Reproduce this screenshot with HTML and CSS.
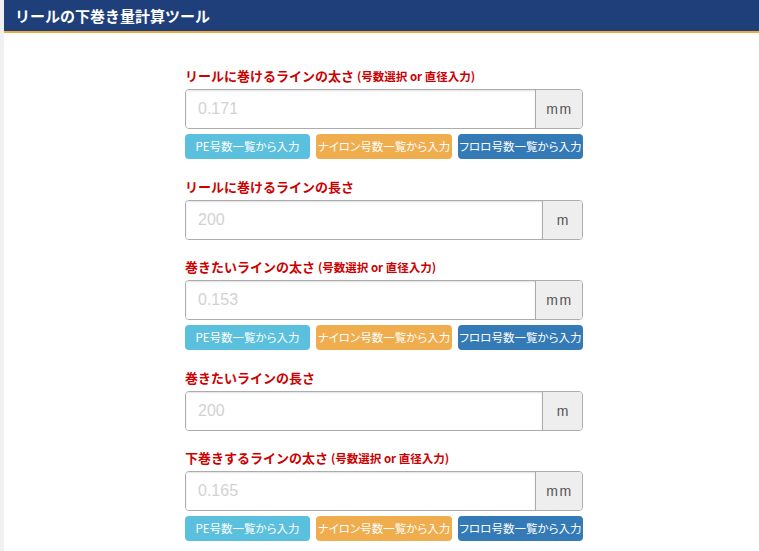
FILE: index.html
```html
<!DOCTYPE html>
<html lang="ja">
<head>
<meta charset="utf-8">
<title>リールの下巻き量計算ツール</title>
<link rel="stylesheet" href="styles.css">
</head>
<body>
<div class="page">
  <header class="title-bar"><h1>リールの下巻き量計算ツール</h1></header>
  <main class="content">
    <form class="form">
      <div class="group">
        <label class="label">リールに巻けるラインの太さ <small>(号数選択 or 直径入力)</small></label>
        <div class="input-group">
          <input class="control" type="text" placeholder="0.171">
          <span class="addon addon-mm">mm</span>
        </div>
        <div class="btns">
          <button type="button" class="btn btn-pe">PE号数一覧から入力</button>
          <button type="button" class="btn btn-ny">ナイロン号数一覧から入力</button>
          <button type="button" class="btn btn-fc">フロロ号数一覧から入力</button>
        </div>
      </div>
      <div class="group">
        <label class="label">リールに巻けるラインの長さ</label>
        <div class="input-group">
          <input class="control" type="text" placeholder="200">
          <span class="addon addon-m">m</span>
        </div>
      </div>
      <div class="group">
        <label class="label">巻きたいラインの太さ <small>(号数選択 or 直径入力)</small></label>
        <div class="input-group">
          <input class="control" type="text" placeholder="0.153">
          <span class="addon addon-mm">mm</span>
        </div>
        <div class="btns">
          <button type="button" class="btn btn-pe">PE号数一覧から入力</button>
          <button type="button" class="btn btn-ny">ナイロン号数一覧から入力</button>
          <button type="button" class="btn btn-fc">フロロ号数一覧から入力</button>
        </div>
      </div>
      <div class="group">
        <label class="label">巻きたいラインの長さ</label>
        <div class="input-group">
          <input class="control" type="text" placeholder="200">
          <span class="addon addon-m">m</span>
        </div>
      </div>
      <div class="group">
        <label class="label">下巻きするラインの太さ <small>(号数選択 or 直径入力)</small></label>
        <div class="input-group">
          <input class="control" type="text" placeholder="0.165">
          <span class="addon addon-mm">mm</span>
        </div>
        <div class="btns">
          <button type="button" class="btn btn-pe">PE号数一覧から入力</button>
          <button type="button" class="btn btn-ny">ナイロン号数一覧から入力</button>
          <button type="button" class="btn btn-fc">フロロ号数一覧から入力</button>
        </div>
      </div>
    </form>
  </main>
</div>
</body>
</html>
```

FILE: styles.css
```css
html, body {
  margin: 0;
  padding: 0;
}
body {
  background: #f1f1f1;
  font-family: "Noto Sans CJK JP", "Liberation Sans", sans-serif;
  overflow: hidden;
}
.page {
  margin-left: 4px;
  background: #ffffff;
  min-height: 551px;
}
.title-bar {
  background: #1f3f7b;
  border-bottom: 2px solid #f0a73c;
  height: 31px;
  display: flex;
  align-items: center;
  padding-left: 11px;
}
.title-bar h1 {
  margin: 0;
  color: #ffffff;
  font-size: 15px;
  font-weight: bold;
  line-height: 1;
}
.content {
  padding-top: 34px;
  padding-left: 181px;
}
.form {
  width: 398px;
}
.group {
  margin-bottom: 18.6px;
}
.label {
  display: block;
  color: #cc0000;
  font-size: 13px;
  font-weight: bold;
  line-height: 18px;
  margin-bottom: 4px;
  white-space: nowrap;
}
.label small {
  font-size: 11.5px;
}
.input-group {
  display: flex;
  height: 40px;
  box-sizing: border-box;
  border: 1px solid #acacac;
  border-radius: 4px;
  overflow: hidden;
}
.control {
  flex: 1;
  min-width: 0;
  border: 0;
  margin: 0;
  padding: 0 12px;
  font-family: "Liberation Sans", sans-serif;
  font-size: 16px;
  color: #555;
  background: #fff;
  box-shadow: inset 0 1px 2px rgba(0,0,0,0.12);
  outline: none;
}
.control::placeholder {
  color: #d2d2d2;
}
.addon {
  display: flex;
  align-items: center;
  justify-content: center;
  background: #eeeeee;
  border-left: 1px solid #acacac;
  font-family: "Liberation Sans", sans-serif;
  font-size: 14px;
  color: #555;
}
.addon-mm {
  width: 45px;
  letter-spacing: 1.5px;
  padding-left: 1px;
}
.addon-m {
  width: 39px;
}
.btns {
  display: grid;
  grid-template-columns: 125px 136px 125px;
  column-gap: 6px;
  margin-top: 5px;
}
.btn {
  height: 25px;
  border: 0;
  border-radius: 4px;
  padding: 0;
  color: #ffffff;
  font-family: "Noto Sans CJK JP", sans-serif;
  font-size: 11.5px;
  font-feature-settings: "palt";
  white-space: nowrap;
  line-height: 25px;
}
.btn-pe { background: #5bc0de; }
.btn-ny { background: #f0ad4e; }
.btn-fc { background: #337ab7; }
```
